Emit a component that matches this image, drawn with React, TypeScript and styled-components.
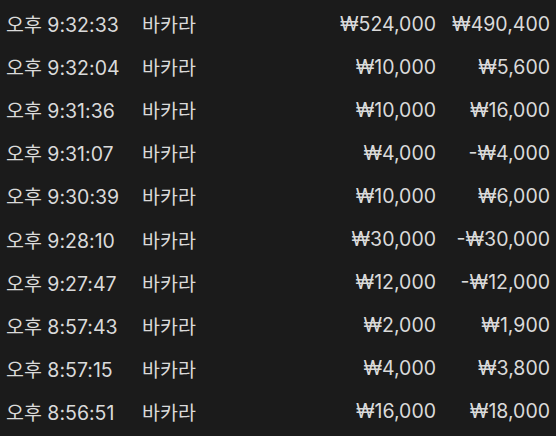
import styled, { createGlobalStyle } from 'styled-components';

const GlobalStyle = createGlobalStyle`
  html, body {
    margin: 0;
    padding: 0;
    background: #1b1b1b;
  }
  body {
    font-family: Inter, "Noto Sans CJK KR", sans-serif;
    color: #dadada;
  }
`;

type Entry = {
  time: string;
  game: string;
  bet: string;
  result: string;
};

const entries: Entry[] = [
  { time: '오후 9:32:33', game: '바카라', bet: '₩524,000', result: '₩490,400' },
  { time: '오후 9:32:04', game: '바카라', bet: '₩10,000', result: '₩5,600' },
  { time: '오후 9:31:36', game: '바카라', bet: '₩10,000', result: '₩16,000' },
  { time: '오후 9:31:07', game: '바카라', bet: '₩4,000', result: '-₩4,000' },
  { time: '오후 9:30:39', game: '바카라', bet: '₩10,000', result: '₩6,000' },
  { time: '오후 9:28:10', game: '바카라', bet: '₩30,000', result: '-₩30,000' },
  { time: '오후 9:27:47', game: '바카라', bet: '₩12,000', result: '-₩12,000' },
  { time: '오후 8:57:43', game: '바카라', bet: '₩2,000', result: '₩1,900' },
  { time: '오후 8:57:15', game: '바카라', bet: '₩4,000', result: '₩3,800' },
  { time: '오후 8:56:51', game: '바카라', bet: '₩16,000', result: '₩18,000' },
];

const App = () => {
  return (
    <>
      <GlobalStyle />
      <List>
        {entries.map((e, i) => (
          <Row key={i}>
            <Cell>{e.time}</Cell>
            <Cell>{e.game}</Cell>
            <Cell align="right">{e.bet}</Cell>
            <Cell align="right">{e.result}</Cell>
          </Row>
        ))}
      </List>
    </>
  );
};

export default App;

const List = styled.div`
  width: 556px;
  height: 436px;
  padding: 2px 6px 0 6px;
  box-sizing: border-box;
  overflow: hidden;
`;

const Row = styled.div`
  display: grid;
  grid-template-columns: 136px 1fr 110px 114px;
  align-items: center;
  height: 43.1px;
`;

const Cell = styled.div<{ align?: 'left' | 'right' }>`
  font-size: 19.5px;
  text-align: ${({ align }) => align ?? 'left'};
  white-space: nowrap;
`;
